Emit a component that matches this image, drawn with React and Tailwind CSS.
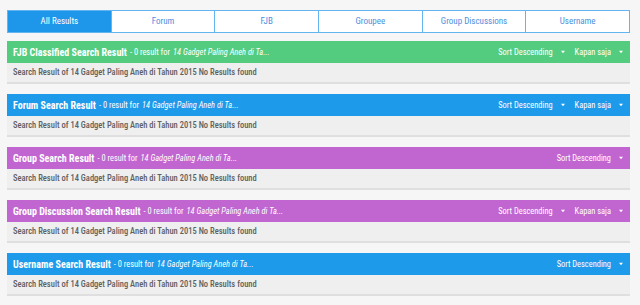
const FONT = { fontFamily: '"Roboto Condensed", Roboto, "Liberation Sans", sans-serif' };

const tabs = ["All Results", "Forum", "FJB", "Groupee", "Group Discussions", "Username"];

const sections = [
  { title: "FJB Classified Search Result", color: "bg-[#54cc80]", kapan: true },
  { title: "Forum Search Result", color: "bg-[#1e9aea]", kapan: true },
  { title: "Group Search Result", color: "bg-[#c165d0]", kapan: false },
  { title: "Group Discussion Search Result", color: "bg-[#c165d0]", kapan: true },
  { title: "Username Search Result", color: "bg-[#1e9aea]", kapan: false },
];

function Caret() {
  return (
    <svg width="6" height="4" viewBox="0 0 6 4" className="ml-[7px] mt-[1px]">
      <path d="M1 0.8 L5 0.8 L3 3.2 Z" fill="white" />
    </svg>
  );
}

export default function App() {
  return (
    <div className="min-h-[305px] w-[640px] bg-[#f6f6f6] pt-[10px] pl-[7px] pr-[10px]" style={FONT}>
      <div className="flex h-[23px] border border-[#64b4f2] bg-white">
        {tabs.map((t, i) => (
          <div
            key={t}
            className={
              "flex flex-1 items-center justify-center text-[9px] " +
              (i === 0 ? "bg-[#1e96ea] text-white" : "text-[#4d8fe0]") +
              (i > 0 ? " border-l border-[#64b4f2]" : "")
            }
          >
            {t}
          </div>
        ))}
      </div>
      <div className="mt-[8px] flex flex-col">
        {sections.map((s) => (
          <div key={s.title} className="mb-[10px]">
            <div className={"flex h-[22px] items-center pl-[6px] pr-[6px] text-white " + s.color}>
              <span className="text-[10px] font-bold">{s.title}</span>
              <span className="ml-[3px] text-[8.4px]">- 0 result for</span>
              <span className="ml-[3px] text-[8.4px] italic">14 Gadget Paling Aneh di Ta...</span>
              <div className="ml-auto flex items-center text-[8.4px]">
                <span>Sort Descending</span>
                <Caret />
                {s.kapan && (
                  <>
                    <span className="ml-[9px]">Kapan saja</span>
                    <Caret />
                  </>
                )}
              </div>
            </div>
            <div className="flex h-[21px] items-center border-b-2 border-[#dfdfdf] bg-[#efefef] pl-[6px] text-[8.5px] font-medium text-[#606060]">
              Search Result of 14 Gadget Paling Aneh di Tahun 2015 No Results found
            </div>
          </div>
        ))}
      </div>
    </div>
  );
}
